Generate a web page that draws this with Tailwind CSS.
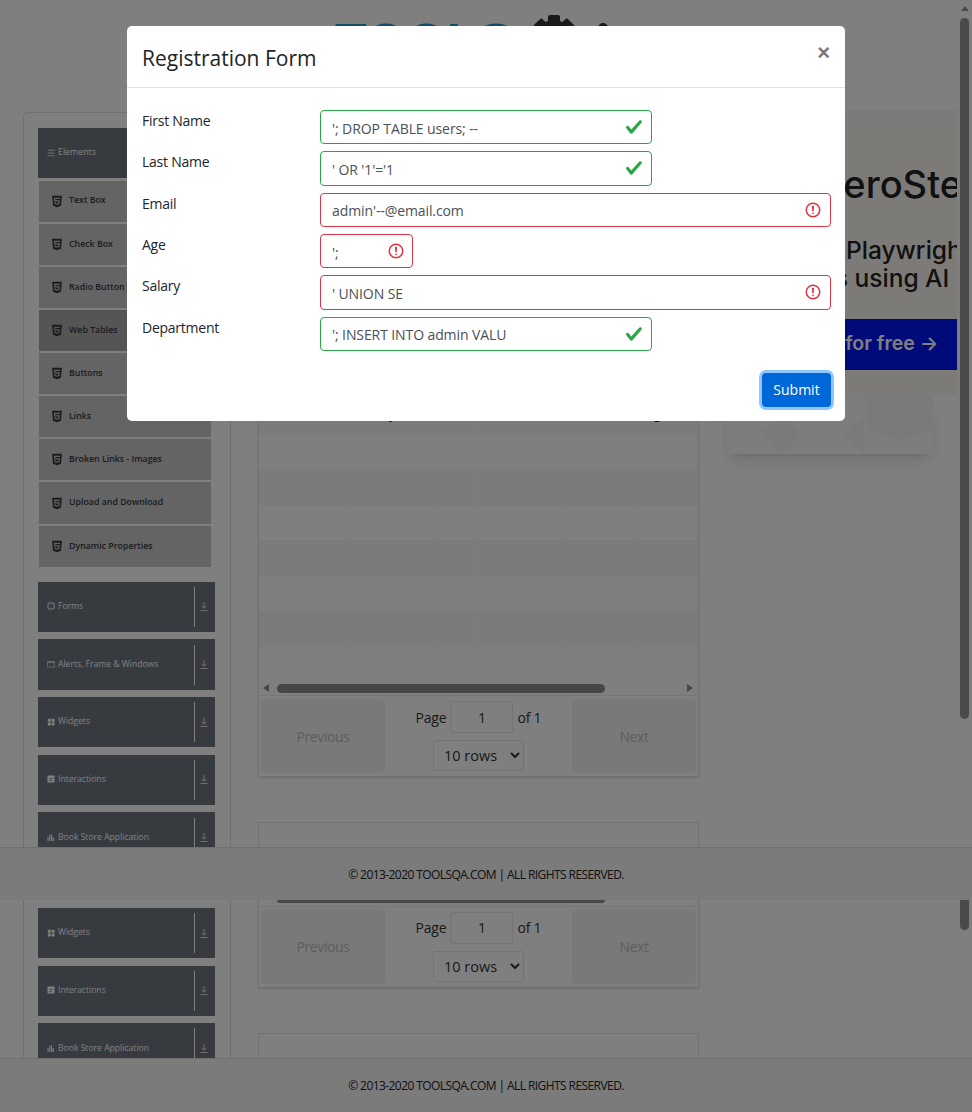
<!DOCTYPE html>
<html lang="en">
<head>
  <meta charset="UTF-8">
  <meta name="viewport" content="width=device-width, initial-scale=1.0">
  <title>Web Tables - Registration Form</title>
  <script src="https://cdn.jsdelivr.net/npm/@tailwindcss/browser@4"></script>
</head>
<body class="relative h-[1112px] w-[972px] overflow-hidden bg-white font-['Open_Sans',sans-serif] text-[#333]">
  <svg class="hidden">
    <symbol id="html5" viewBox="0 0 384 512"><path d="M0 32l34.9 395.8L191.5 480l157.6-52.2L384 32H0zm308.2 127.9H124.4l4.1 49.4h175.6l-13.6 148.4-97.9 27v.3h-1.1l-98.7-27.3-6-75.8h47.7L138 320l53.5 14.5 53.7-14.5 6-62.2H84.3L71.5 112.2h241.1l-4.4 47.7z"></path></symbol>
    <symbol id="down" viewBox="0 0 8 9"><path d="M4 0v6M1.5 3.8 4 6.3l2.5-2.5M.5 8.5h7" fill="none" stroke="#fff" stroke-width="0.8"></path></symbol>
    <symbol id="forms" viewBox="0 0 8 8"><rect x="1" y="1" width="6" height="6" rx="1" fill="none" stroke="#fff"></rect></symbol>
    <symbol id="alerts" viewBox="0 0 8 8"><path d="M.4 1.5h7.2v5.6H.4zM.4 2.6h7.2" fill="none" stroke="#fff" stroke-width="0.6"></path></symbol>
    <symbol id="widgets" viewBox="0 0 8 8"><path d="M.8.8h3v3h-3zM4.6.8h3v3h-3zM.8 4.6h3v3h-3zM4.6 4.6h3v3h-3z" fill="#fff"></path></symbol>
    <symbol id="interactions" viewBox="0 0 8 8"><path fill-rule="evenodd" d="M.5.5h7v7h-7zM2 3h4v.8H2zM2 5h3v.8H2z" fill="#fff"></path></symbol>
    <symbol id="books" viewBox="0 0 8 8"><path d="M.5 8V4h1v4zM2.2 8V2h1v6zM3.9 8V1h1v7zM5.6 8l-.3-4 1-.2.9 4.2z" fill="#fff"></path></symbol>
    <symbol id="check" viewBox="0 0 8 8"><path fill="#28a745" d="M2.3 6.73L.6 4.53c-.4-1.04.46-1.4 1.1-.8l1.1 1.4 3.4-3.8c.6-.63 1.6-.27 1.2.7l-4 4.6c-.43.5-.8.4-1.1.1z"></path></symbol>
    <symbol id="invalid" viewBox="0 0 12 12"><circle cx="6" cy="6" r="4.5" fill="none" stroke="#dc3545"></circle><path stroke="#dc3545" stroke-linejoin="round" d="M5.8 3.6h.4L6 6.5z" fill="none"></path><circle cx="6" cy="8.2" r=".6" fill="#dc3545"></circle></symbol>
  </svg>

  <!-- page, first screen -->
  <div class="relative h-[847px] overflow-hidden">
    <header class="flex h-[112px] pl-[335px]">
      <span class="mt-[12px] h-[60px] font-['Liberation_Sans',sans-serif] text-[52px] leading-[60px] font-bold text-[#1c9cd0]">TOOLS</span>
      <svg class="mt-[15px] ml-[17px]" width="48" height="48" viewBox="0 0 48 48" fill="#333">
        <circle cx="24" cy="24" r="19"></circle>
        <rect x="18" y="0" width="12" height="48" rx="2"></rect>
        <rect x="18" y="0" width="12" height="48" rx="2" transform="rotate(45 24 24)"></rect>
        <rect x="18" y="0" width="12" height="48" rx="2" transform="rotate(90 24 24)"></rect>
        <rect x="18" y="0" width="12" height="48" rx="2" transform="rotate(135 24 24)"></rect>
      </svg>
      <span class="mt-[23px] ml-[20px] h-[10px] w-[10px] rounded-full bg-[#333]"></span>
    </header>
    <div class="flex pl-[23px]">
      <aside class="h-[800px] w-[208px] shrink-0 rounded-tl-[5px] border-t border-r border-l border-[#dedede] pt-[15px] pl-[14px]">
        <div class="flex h-[50px] w-[177px] items-center gap-[3px] bg-[#6e747e] pl-[9px] text-[8.8px] text-white">
          <svg class="h-[8px] w-[8px]" viewBox="0 0 8 8"><path d="M.5 1.2h7M.5 4h7M.5 6.8h7" stroke="#fff" stroke-width="0.8"></path></svg>Elements
        </div>
        <ul class="mt-[2.5px] flex w-[173px] flex-col gap-[2px] pl-[1px] text-[8.8px] font-semibold text-[#343a40]">
          <li class="flex h-[41.15px] items-center gap-[7px] bg-[#c8c8c8] pl-[13px]"><svg class="h-[13px] w-[10px] fill-[#343a40]"><use href="#html5"></use></svg>Text Box</li>
          <li class="flex h-[41.15px] items-center gap-[7px] bg-[#c8c8c8] pl-[13px]"><svg class="h-[13px] w-[10px] fill-[#343a40]"><use href="#html5"></use></svg>Check Box</li>
          <li class="flex h-[41.15px] items-center gap-[7px] bg-[#c8c8c8] pl-[13px]"><svg class="h-[13px] w-[10px] fill-[#343a40]"><use href="#html5"></use></svg>Radio Button</li>
          <li class="flex h-[41.15px] items-center gap-[7px] bg-[#aaaaaa] pl-[13px]"><svg class="h-[13px] w-[10px] fill-[#343a40]"><use href="#html5"></use></svg>Web Tables</li>
          <li class="flex h-[41.15px] items-center gap-[7px] bg-[#c8c8c8] pl-[13px]"><svg class="h-[13px] w-[10px] fill-[#343a40]"><use href="#html5"></use></svg>Buttons</li>
          <li class="flex h-[41.15px] items-center gap-[7px] bg-[#c8c8c8] pl-[13px]"><svg class="h-[13px] w-[10px] fill-[#343a40]"><use href="#html5"></use></svg>Links</li>
          <li class="flex h-[41.15px] items-center gap-[7px] bg-[#c8c8c8] pl-[13px]"><svg class="h-[13px] w-[10px] fill-[#343a40]"><use href="#html5"></use></svg>Broken Links - Images</li>
          <li class="flex h-[41.15px] items-center gap-[7px] bg-[#c8c8c8] pl-[13px]"><svg class="h-[13px] w-[10px] fill-[#343a40]"><use href="#html5"></use></svg>Upload and Download</li>
          <li class="flex h-[41.15px] items-center gap-[7px] bg-[#c8c8c8] pl-[13px]"><svg class="h-[13px] w-[10px] fill-[#343a40]"><use href="#html5"></use></svg>Dynamic Properties</li>
        </ul>
        <div class="mt-[15px] flex w-[177px] flex-col gap-[7.33px] text-[8.6px] text-white">
          <div class="flex h-[50.33px] items-center bg-[#6e747e] pl-[9px]"><svg class="mb-[1px] h-[8px] w-[8px]"><use href="#forms"></use></svg><span class="mb-[1px] ml-[3px]">Forms</span><span class="mr-[7px] ml-auto flex h-[40px] items-center border-l border-[#fff] pl-[5px]"><svg class="h-[9px] w-[8px]"><use href="#down"></use></svg></span></div>
          <div class="flex h-[50.33px] items-center bg-[#6e747e] pl-[9px]"><svg class="mb-[1px] h-[8px] w-[8px]"><use href="#alerts"></use></svg><span class="mb-[1px] ml-[3px]">Alerts, Frame &amp; Windows</span><span class="mr-[7px] ml-auto flex h-[40px] items-center border-l border-[#fff] pl-[5px]"><svg class="h-[9px] w-[8px]"><use href="#down"></use></svg></span></div>
          <div class="flex h-[50.33px] items-center bg-[#6e747e] pl-[9px]"><svg class="mb-[1px] h-[8px] w-[8px]"><use href="#widgets"></use></svg><span class="mb-[1px] ml-[3px]">Widgets</span><span class="mr-[7px] ml-auto flex h-[40px] items-center border-l border-[#fff] pl-[5px]"><svg class="h-[9px] w-[8px]"><use href="#down"></use></svg></span></div>
          <div class="flex h-[50.33px] items-center bg-[#6e747e] pl-[9px]"><svg class="mb-[1px] h-[8px] w-[8px]"><use href="#interactions"></use></svg><span class="mb-[1px] ml-[3px]">Interactions</span><span class="mr-[7px] ml-auto flex h-[40px] items-center border-l border-[#fff] pl-[5px]"><svg class="h-[9px] w-[8px]"><use href="#down"></use></svg></span></div>
          <div class="flex h-[50.33px] items-center bg-[#6e747e] pl-[9px]"><svg class="mb-[1px] h-[8px] w-[8px]"><use href="#books"></use></svg><span class="mb-[1px] ml-[3px]">Book Store Application</span><span class="mr-[7px] ml-auto flex h-[40px] items-center border-l border-[#fff] pl-[5px]"><svg class="h-[9px] w-[8px]"><use href="#down"></use></svg></span></div>
        </div>
      </aside>
      <main class="ml-[27px] w-[441px] shrink-0 pt-[181px]">
        <div class="border border-[#e2e2e2] shadow-sm">
          <div id="rows"></div>
          <div class="relative h-[13px]">
            <span class="absolute top-[2px] left-[4px] h-0 w-0 border-y-[4px] border-r-[6px] border-y-transparent border-r-[#8f8f8f]"></span>
            <span class="absolute top-[1.5px] left-[18px] h-[9px] w-[328px] rounded-full bg-[#8f8f8f]"></span>
            <span class="absolute top-[2px] right-[5px] h-0 w-0 border-y-[4px] border-l-[6px] border-y-transparent border-l-[#8f8f8f]"></span>
          </div>
          <div class="flex h-[80.7px] items-center border-t border-[#ececec] px-[2px]">
            <button class="h-[74px] w-[124px] rounded-[3px] bg-[#f3f3f3] text-[14px] tracking-[-0.4px] text-[#bbb]">Previous</button>
            <div class="flex w-[187px] flex-col items-center gap-[7px]">
              <div class="flex items-center gap-[4px] text-[14px] tracking-[-0.2px]">Page <input value="1" class="h-[32px] w-[63px] rounded-[3px] border border-[#e6e6e6] bg-white text-center"> of 1</div>
              <select class="h-[31px] w-[91px] rounded-[3px] border border-[#e6e6e6] bg-white pl-[6px] text-[14.5px] text-[#333]"><option>10 rows</option></select>
            </div>
            <button class="h-[74px] w-[124px] rounded-[3px] bg-[#f3f3f3] text-[14px] tracking-[-0.4px] text-[#bbb]">Next</button>
          </div>
        </div>
        <div class="mt-[45.3px] h-[200px] border border-[#e2e2e2]"></div>
      </main>
      <section class="-mt-[2px] ml-[27px] w-[231px] shrink-0">
        <div class="h-[285px] overflow-hidden bg-[#fbf6f1]">
          <svg class="block h-[15px] w-full bg-[#f7f7f7]" viewBox="0 0 231 15"><path d="M120 15l24-15 14 15zM165 15l12-15 14 15zM196 15l10-15 16 15z" fill="#f2f2f2"></path></svg>
          <p class="mt-[37px] ml-[93px] font-['Inter',sans-serif] text-[38px] leading-[44px] font-medium whitespace-nowrap text-[#222]">ZeroStep</p>
          <p class="mt-[30px] ml-[-37px] font-['Inter',sans-serif] text-[24.5px] leading-[28px] font-medium whitespace-nowrap text-[#222]">Supercharge Playwright</p>
          <p class="ml-[65px] font-['Inter',sans-serif] text-[24.5px] leading-[28px] font-medium whitespace-nowrap text-[#222]">tests using AI</p>
          <div class="mt-[27px] flex h-[51px] items-center bg-[#0014f0] pb-[2px] pl-[83px] font-['Inter',sans-serif] text-[19.5px] font-semibold whitespace-nowrap text-white">Try for free →</div>
        </div>
        <svg class="block h-[59px] w-[207px] bg-[#fafafa] shadow-lg" viewBox="0 0 207 59"><path d="M35 38l20-17 20 17-20 21zM118 38l20-17v38zM140 0h67v35l-34 10-33-10z" fill="#f4f4f4"></path></svg>
      </section>
    </div>
    <div class="absolute top-[18px] right-[3px] h-[701px] w-[9px] rounded-full bg-[#949494]"></div>
    <span class="absolute top-[6px] right-[3px] h-0 w-0 border-x-[4.5px] border-b-[5px] border-x-transparent border-b-[#949494]"></span>
  </div>

  <footer class="flex h-[53px] items-center justify-center border-t border-[#dedede] bg-[#f6f6f6] pt-[1px] text-[12px] tracking-[-0.57px] text-[#222]">© 2013-2020 TOOLSQA.COM | ALL RIGHTS RESERVED.</footer>

  <!-- page, second screen -->
  <div class="relative flex h-[158px] overflow-hidden pl-[23px]">
    <aside class="w-[208px] shrink-0 border-r border-l border-[#dedede] pt-[8px] pl-[14px]">
      <div class="flex w-[177px] flex-col gap-[7.33px] text-[8.6px] text-white">
        <div class="flex h-[50.33px] items-center bg-[#6e747e] pl-[9px]"><svg class="mb-[1px] h-[8px] w-[8px]"><use href="#widgets"></use></svg><span class="mb-[1px] ml-[3px]">Widgets</span><span class="mr-[7px] ml-auto flex h-[40px] items-center border-l border-[#fff] pl-[5px]"><svg class="h-[9px] w-[8px]"><use href="#down"></use></svg></span></div>
        <div class="flex h-[50.33px] items-center bg-[#6e747e] pl-[9px]"><svg class="mb-[1px] h-[8px] w-[8px]"><use href="#interactions"></use></svg><span class="mb-[1px] ml-[3px]">Interactions</span><span class="mr-[7px] ml-auto flex h-[40px] items-center border-l border-[#fff] pl-[5px]"><svg class="h-[9px] w-[8px]"><use href="#down"></use></svg></span></div>
        <div class="flex h-[50.33px] items-center bg-[#6e747e] pl-[9px]"><svg class="mb-[1px] h-[8px] w-[8px]"><use href="#books"></use></svg><span class="mb-[1px] ml-[3px]">Book Store Application</span><span class="mr-[7px] ml-auto flex h-[40px] items-center border-l border-[#fff] pl-[5px]"><svg class="h-[9px] w-[8px]"><use href="#down"></use></svg></span></div>
      </div>
    </aside>
    <main class="ml-[27px] w-[441px] shrink-0">
      <div class="border-r border-b border-l border-[#e2e2e2] shadow-sm">
        <div class="h-[6px] pl-[18px]"><div class="h-[3px] w-[328px] rounded-b-full bg-[#8f8f8f]"></div></div>
        <div class="flex h-[80.7px] items-center border-t border-[#ececec] px-[2px]">
          <button class="h-[74px] w-[124px] rounded-[3px] bg-[#f3f3f3] text-[14px] tracking-[-0.4px] text-[#bbb]">Previous</button>
          <div class="flex w-[187px] flex-col items-center gap-[7px]">
            <div class="flex items-center gap-[4px] text-[14px] tracking-[-0.2px]">Page <input value="1" class="h-[32px] w-[63px] rounded-[3px] border border-[#e6e6e6] bg-white text-center"> of 1</div>
            <select class="h-[31px] w-[91px] rounded-[3px] border border-[#e6e6e6] bg-white pl-[6px] text-[14.5px] text-[#333]"><option>10 rows</option></select>
          </div>
          <button class="h-[74px] w-[124px] rounded-[3px] bg-[#f3f3f3] text-[14px] tracking-[-0.4px] text-[#bbb]">Next</button>
        </div>
      </div>
      <div class="mt-[45.3px] h-[60px] border border-[#e2e2e2]"></div>
    </main>
    <div class="absolute top-0 right-[3px] h-[30px] w-[9px] rounded-b-full bg-[#949494]"></div>
  </div>

  <footer class="flex h-[54px] items-center justify-center border-t border-[#dedede] bg-[#f6f6f6] pt-[1px] text-[12px] tracking-[-0.57px] text-[#222]">© 2013-2020 TOOLSQA.COM | ALL RIGHTS RESERVED.</footer>

  <!-- modal -->
  <div class="fixed inset-0 bg-black/50 pt-[26px] pl-[127px]">
    <div class="h-[395px] w-[718px] rounded-[5px] bg-white">
      <div class="flex h-[62px] items-center justify-between border-b border-[#dee2e6] px-[15px]">
        <h5 class="pt-[4px] text-[21px] font-medium text-[#212529]">Registration Form</h5>
        <span class="mb-[8px] font-['Liberation_Sans',sans-serif] text-[22px] font-bold text-[#7a7a7a]">×</span>
      </div>
      <form class="pt-[22px] pr-[14px] pl-[15px] text-[14px] tracking-[-0.1px] text-[#495057]">
        <div class="mb-[6.93px] flex h-[34.4px]">
          <label class="w-[178px] leading-[22px] tracking-[-0.25px] text-[#212529]">First Name</label>
          <div class="relative w-[332px]"><input value="'; DROP TABLE users; --" class="h-full w-full rounded-[4px] border border-[#28a745] bg-white pt-[2px] pr-[36px] pl-[11px]"><svg class="absolute top-[8px] right-[9px] h-[18px] w-[18px]"><use href="#check"></use></svg></div>
        </div>
        <div class="mb-[6.93px] flex h-[34.4px]">
          <label class="w-[178px] leading-[22px] tracking-[-0.25px] text-[#212529]">Last Name</label>
          <div class="relative w-[332px]"><input value="' OR '1'='1" class="h-full w-full rounded-[4px] border border-[#28a745] bg-white pt-[2px] pr-[36px] pl-[11px]"><svg class="absolute top-[8px] right-[9px] h-[18px] w-[18px]"><use href="#check"></use></svg></div>
        </div>
        <div class="mb-[6.93px] flex h-[34.4px]">
          <label class="w-[178px] leading-[22px] tracking-[-0.25px] text-[#212529]">Email</label>
          <div class="relative w-[511px]"><input value="admin'--@email.com" class="h-full w-full rounded-[4px] border border-[#dc3545] bg-white pt-[2px] pr-[36px] pl-[11px]"><svg class="absolute top-[8px] right-[9px] h-[18px] w-[18px]"><use href="#invalid"></use></svg></div>
        </div>
        <div class="mb-[6.93px] flex h-[34.4px]">
          <label class="w-[178px] leading-[22px] tracking-[-0.25px] text-[#212529]">Age</label>
          <div class="relative w-[93px]"><input value="';" class="h-full w-full rounded-[4px] border border-[#dc3545] bg-white pt-[2px] pr-[36px] pl-[11px]"><svg class="absolute top-[8px] right-[8px] h-[18px] w-[18px]"><use href="#invalid"></use></svg></div>
        </div>
        <div class="mb-[6.93px] flex h-[34.4px]">
          <label class="w-[178px] leading-[22px] tracking-[-0.25px] text-[#212529]">Salary</label>
          <div class="relative w-[511px]"><input value="' UNION SE" class="h-full w-full rounded-[4px] border border-[#dc3545] bg-white pt-[2px] pr-[36px] pl-[11px]"><svg class="absolute top-[8px] right-[9px] h-[18px] w-[18px]"><use href="#invalid"></use></svg></div>
        </div>
        <div class="mb-[6.93px] flex h-[34.4px]">
          <label class="w-[178px] leading-[22px] tracking-[-0.25px] text-[#212529]">Department</label>
          <div class="relative w-[332px]"><input value="'; INSERT INTO admin VALU" class="h-full w-full rounded-[4px] border border-[#28a745] bg-white pt-[2px] pr-[36px] pl-[11px]"><svg class="absolute top-[8px] right-[9px] h-[18px] w-[18px]"><use href="#check"></use></svg></div>
        </div>
        <div class="mt-[22px] flex justify-end">
          <button type="button" class="h-[34px] w-[69px] rounded-[4px] bg-[#0067d8] text-[14px] font-medium tracking-normal text-white ring-[3px] ring-[#8fc6ff]">Submit</button>
        </div>
      </form>
    </div>
  </div>

  <script>
    // header + 10 rows; only the bottom of row 3 shows below the modal
    const data = Array.from({ length: 11 }, () => ['', '', '', '', '', '']);
    data[3] = ['', 'Gentry', '', '', '', 'Legal'];
    const widths = [90, 90, 36, 91, 71, 63];
    document.getElementById('rows').innerHTML = data.map((row, i) =>
      `<div class="flex h-[35.3px] ${i < 10 ? 'border-b border-[#f6f6f6]' : ''} ${i % 2 ? 'bg-[#f6f6f6]' : 'bg-white'}">` +
      row.map((cell, j) =>
        `<div class="border-r border-[#f8f8f8] px-[3px] text-[14px] leading-[25px] text-[#222]" style="width:${widths[j]}px">${cell}</div>`
      ).join('') + '</div>'
    ).join('');
  </script>
</body>
</html>
